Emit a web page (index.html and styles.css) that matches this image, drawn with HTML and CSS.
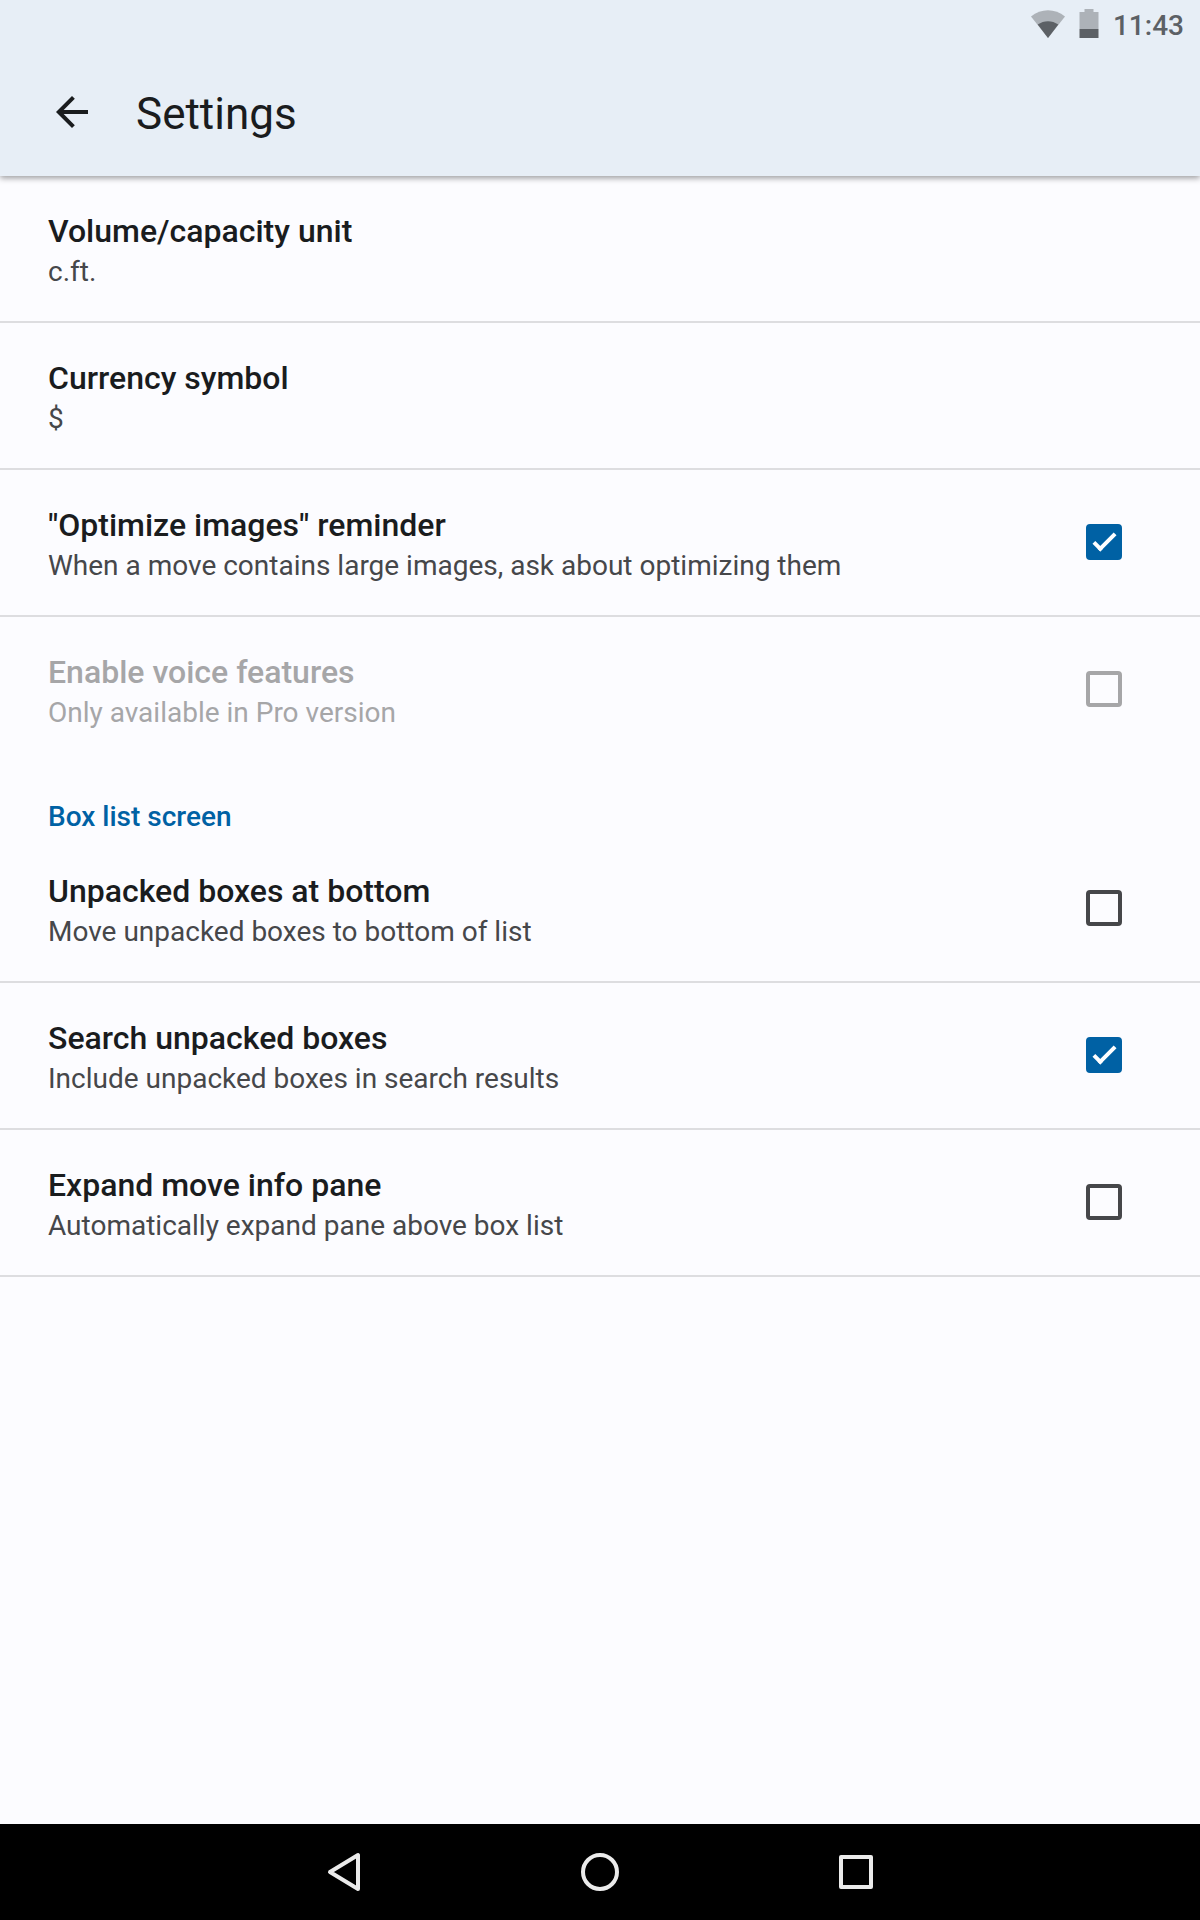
FILE: index.html
```
<!DOCTYPE html>
<html lang="en">

<head>
    <meta charset="UTF-8">
    <meta name="viewport" content="width=device-width, initial-scale=1.0">
    <title>Settings</title>
    <link rel="stylesheet" href="styles.css">
</head>

<body>
    <header class="top">
        <div class="status">
            <svg class="wifi" viewBox="0 0 34 28" aria-hidden="true">
                <path fill="#adb2b8" d="M17 28L0 6.500C10 -2 24 -2 34 6.500Z" />
                <path fill="#5c6065" d="M17 28L6.700 14.500C13 10 21 10 27.300 14.500Z" />
            </svg>
            <svg class="battery" viewBox="0 0 20 30" aria-hidden="true">
                <path fill="#adb2b8" d="M5.500 0H14.500V3H19.500V20H.5V3H5.500Z" />
                <path fill="#5c6065" d="M.5 20H19.500V29H.5Z" />
            </svg>
            <time>11:43</time>
        </div>
        <div class="toolbar">
            <button class="icon" type="button" aria-label="Back">
                <svg width="48" height="48" viewBox="0 0 24 24">
                    <path d="M20 11H7.83l5.59-5.59L12 4l-8 8 8 8 1.41-1.41L7.83 13H20v-2z" />
                </svg>
            </button>
            <h1>Settings</h1>
        </div>
    </header>

    <main>
        <button class="row" type="button">
            <span class="text">
                <span class="title">Volume/capacity unit</span>
                <span class="summary">c.ft.</span>
            </span>
        </button>
        <button class="row" type="button">
            <span class="text">
                <span class="title">Currency symbol</span>
                <span class="summary">$</span>
            </span>
        </button>
        <label class="row">
            <span class="text">
                <span class="title">"Optimize images" reminder</span>
                <span class="summary">When a move contains large images, ask about optimizing them</span>
            </span>
            <input type="checkbox" checked>
        </label>
        <label class="row last disabled">
            <span class="text">
                <span class="title">Enable voice features</span>
                <span class="summary">Only available in Pro version</span>
            </span>
            <input type="checkbox" disabled>
        </label>

        <h2>Box list screen</h2>
        <label class="row">
            <span class="text">
                <span class="title">Unpacked boxes at bottom</span>
                <span class="summary">Move unpacked boxes to bottom of list</span>
            </span>
            <input type="checkbox">
        </label>
        <label class="row">
            <span class="text">
                <span class="title">Search unpacked boxes</span>
                <span class="summary">Include unpacked boxes in search results</span>
            </span>
            <input type="checkbox" checked>
        </label>
        <label class="row">
            <span class="text">
                <span class="title">Expand move info pane</span>
                <span class="summary">Automatically expand pane above box list</span>
            </span>
            <input type="checkbox">
        </label>
    </main>

    <nav class="navbar">
        <button class="icon" type="button" aria-label="Back">
            <svg width="40" height="40" viewBox="0 0 40 40">
                <path d="M34 3V37L6 20Z" />
            </svg>
        </button>
        <button class="icon" type="button" aria-label="Home">
            <svg width="40" height="40" viewBox="0 0 40 40">
                <circle cx="20" cy="20" r="17" />
            </svg>
        </button>
        <button class="icon" type="button" aria-label="Overview">
            <svg width="40" height="40" viewBox="0 0 40 40">
                <rect x="5" y="5" width="30" height="30" />
            </svg>
        </button>
    </nav>
</body>

</html>
```
FILE: styles.css
```
* {
    box-sizing: border-box;
}

body {
    display: flex;
    flex-direction: column;
    min-height: 100vh;
    margin: 0;
    font-family: Roboto, sans-serif;
    background-color: #fcfcff;
    color: #1a1c1e;
}

h1,
h2 {
    margin: 0;
}

button {
    font-family: inherit;
    color: inherit;
    background: none;
    border: 0;
    padding: 0;
}

.icon {
    display: flex;
}

.icon svg {
    fill: #1a1c1e;
}

.top {
    background-color: #e7eef6;
    box-shadow: 0 2px 6px rgba(0, 0, 0, 0.4);
}

.status {
    display: flex;
    justify-content: flex-end;
    align-items: center;
    height: 48px;
    padding-right: 16px;
    color: #5c6065;
}

.wifi {
    width: 34px;
    height: 28px;
    margin-right: 14px;
}

.battery {
    width: 20px;
    height: 30px;
    margin-right: 14px;
}

.status time {
    padding-top: 4px;
    font-size: 28px;
    font-weight: 500;
    line-height: 44px;
}

.toolbar {
    display: flex;
    align-items: center;
    height: 128px;
    padding: 0 48px;
    gap: 40px;
}

h1 {
    padding-top: 4px;
    font-size: 44px;
    font-weight: 400;
    line-height: 52px;
}

main {
    flex: 1;
}

.row {
    display: flex;
    align-items: center;
    justify-content: space-between;
    width: 100%;
    height: 147px;
    padding: 0 78px 1px 48px;
    border-bottom: 2px solid #dddde0;
    text-align: left;
}

.last {
    border-bottom-color: transparent;
}

.text {
    padding-top: 10px;
}

.title,
.summary {
    display: block;
}

.title {
    font-size: 32px;
    font-weight: 500;
    line-height: 38px;
}

.summary {
    font-size: 28px;
    line-height: 44px;
    color: #46474a;
}

.disabled .title,
.disabled .summary {
    color: #a6a6a8;
}

h2 {
    padding: 34px 48px 0;
    font-size: 28px;
    font-weight: 500;
    line-height: 38px;
    color: #0061a4;
}

input {
    appearance: none;
    width: 36px;
    height: 36px;
    margin: 0;
    border: 4px solid #46474a;
    border-radius: 4px;
}

input:checked {
    border-color: #0061a4;
    background-color: #0061a4;
}

input:checked::before {
    content: "";
    display: block;
    box-sizing: border-box;
    width: 11px;
    height: 23px;
    margin-left: 9px;
    border: solid #fff;
    border-width: 0 4px 4px 0;
    transform: rotate(45deg);
}

input:disabled {
    border-color: #a6a6a8;
}

.navbar {
    display: flex;
    justify-content: center;
    align-items: center;
    gap: 216px;
    height: 96px;
    background-color: #000;
}

.navbar svg {
    fill: none;
    stroke: #ebebeb;
    stroke-width: 4px;
    stroke-linejoin: round;
}
```
